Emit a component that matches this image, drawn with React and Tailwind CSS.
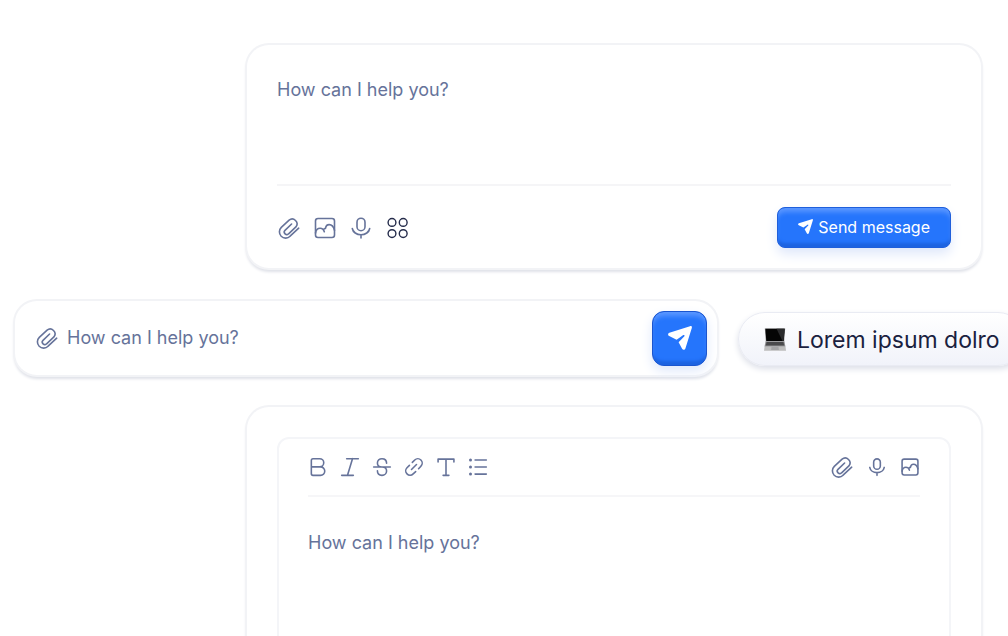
import React from 'react';

function Icon({ children, size = 24, weight = 1.6, className = '' }) {
    return (
        <svg
            width={size}
            height={size}
            viewBox="0 0 24 24"
            fill="none"
            stroke="currentColor"
            strokeWidth={weight}
            strokeLinecap="round"
            strokeLinejoin="round"
            className={`shrink-0 ${className}`}
            aria-hidden="true"
        >
            {children}
        </svg>
    );
}

const ClipIcon = (props) => (
    <Icon {...props}>
        <path d="M21.700 12.200l-8.600 8a6.300 6.300 0 0 1-8.900.1 6.300 6.300 0 0 1 .1-8.900l7.800-7.200a4.800 4.800 0 0 1 6.800 6.700l-7.300 6.900a2.500 2.500 0 0 1-3.600-3.500l6.600-6.300" />
    </Icon>
);

const ImageIcon = (props) => (
    <Icon {...props}>
        <rect x="2.500" y="2.500" width="19" height="19" rx="2.500" />
        <path d="M2.500 17c.5-2.900 2.300-4.700 4.600-4.700 2.200 0 3.600 1.300 4.200 3.500M10.500 13.600c.5-.8 1.200-1.200 2-1.200.3-2.200 1.700-3.800 3.700-3.800 2.700 0 4.500 2.500 5.300 5.600" />
    </Icon>
);

const MicIcon = (props) => (
    <Icon {...props}>
        <rect x="8" y="2.200" width="8" height="12.500" rx="4" />
        <path d="M3.300 12.500c.6 3.700 4.300 6.200 8.700 6.200s8.100-2.500 8.700-6.200M12 18.700v3.300" />
    </Icon>
);

const AppsIcon = (props) => (
    <Icon {...props}>
        <circle cx="7" cy="6.400" r="3.900" />
        <circle cx="18.200" cy="6.400" r="3.900" />
        <circle cx="7" cy="17.600" r="3.900" />
        <circle cx="18.200" cy="17.600" r="3.900" />
    </Icon>
);

const BoldIcon = (props) => (
    <Icon {...props}>
        <path d="M4 4.200C4 3 4.600 2 6 2h8a4.900 4.900 0 0 1 0 9.800H4zM4 11.800H15a5.100 5.100 0 0 1 0 10.200H6c-1.400 0-2-.8-2-2.200z" />
    </Icon>
);

const ItalicIcon = (props) => (
    <Icon {...props}>
        <path d="M8 2h14M2 22h14M15 2L9 22" />
    </Icon>
);

const StrikeIcon = (props) => (
    <Icon {...props}>
        <path d="M2 12h20M17.500 7.500C17.500 4.200 15.200 2 12 2S6.500 4.300 6.500 7.200C6.500 9.800 8.200 12 12 12M12 12c3.800 0 5.500 2 5.500 4.800S15.200 22 12 22s-5.500-2.200-5.500-5.500" />
    </Icon>
);

const LinkIcon = (props) => (
    <Icon {...props}>
        <path d="M9 15l6-6M10 6.500l2.900-2.900a5.100 5.100 0 0 1 7.400 7.400L17.500 14M6.500 10l-2.900 2.900a5.100 5.100 0 0 0 7.400 7.400L14 17.500" />
    </Icon>
);

const TextIcon = (props) => (
    <Icon {...props}>
        <path d="M2.500 6V2.500h19V6M12 2.500V22M8.500 22h7" />
    </Icon>
);

const ListIcon = (props) => (
    <Icon {...props}>
        <path d="M8.500 3.500H22M8.500 12H22M8.500 20.500H22" />
        <g fill="currentColor" stroke="none">
            <circle cx="3" cy="3.500" r="1.800" />
            <circle cx="3" cy="12" r="1.800" />
            <circle cx="3" cy="20.500" r="1.800" />
        </g>
    </Icon>
);

function PlaneIcon({ size }) {
    return (
        <svg width={size} height={size} viewBox="0 0 24 24" fill="currentColor" className="shrink-0" aria-hidden="true">
            <path d="M22 0.200c1.400-.4 2.200.5 1.800 1.800L17.400 22.400c-.5 1.700-2.500 1.900-3.300.4L10.600 16.300l5.800-6.100c.6-.8-.3-1.700-1.100-1.100L8.600 13.700 1.200 10.100C-.4 9.300-.2 7.200 1.400 6.700z" />
        </svg>
    );
}

function LaptopIcon() {
    return (
        <svg width="24" height="24" viewBox="0 0 24 24" className="shrink-0" aria-hidden="true">
            <path d="M1.800 .5h20.400l-1 13H2.800z" fill="#8b8b8d" />
            <path d="M2.400 .8h19.200l-.9 12.200H3.300z" fill="#050505" />
            <path d="M13.500 .8h8.100l-.9 12.200h-1.200z" fill="#2a2a2c" />
            <path d="M2.600 13.200h18.800l1.100 5.600H1.500z" fill="#8e8e90" />
            <path d="M3.500 14h17l.7 3.500H2.800z" fill="#4a4a4c" />
            <path d="M1.500 18.700h21l.5 4H1z" fill="#bdbdbd" />
            <path d="M8.500 18.700h7l.4 3.300H8.100z" fill="#a4a4a6" />
        </svg>
    );
}

function ToolButton({ label, className = '', children }) {
    return (
        <button type="button" aria-label={label} className={`flex ${className}`}>
            {children}
        </button>
    );
}

const formatTools = [
    { label: 'Bold', Glyph: BoldIcon },
    { label: 'Italic', Glyph: ItalicIcon },
    { label: 'Strikethrough', Glyph: StrikeIcon },
    { label: 'Link', Glyph: LinkIcon },
    { label: 'Text', Glyph: TextIcon },
    { label: 'List', Glyph: ListIcon },
];

export default function App() {
    return (
        <div className="h-screen overflow-hidden bg-white pt-[45px] font-['Inter',sans-serif] text-[#66739a]">
            {/* Message box */}
            <form className="mr-[27px] ml-[247px] rounded-[22px] bg-white px-[30px] pt-[31px] pb-5 shadow-[0_0_0_2px_#f2f3f6,0_3px_3px_1px_#dfe1e8]">
                <textarea
                    aria-label="Message"
                    placeholder="How can I help you?"
                    className="block h-[108px] w-full resize-none text-lg outline-none placeholder:text-[#66739a] placeholder:opacity-100"
                />
                <div className="flex items-center justify-between border-t-2 border-[#f5f5f7] pt-[21px]">
                    <div className="flex items-center gap-3">
                        <ToolButton label="Attach file"><ClipIcon /></ToolButton>
                        <ToolButton label="Add image"><ImageIcon /></ToolButton>
                        <ToolButton label="Record voice"><MicIcon /></ToolButton>
                        <ToolButton label="Apps" className="text-[#252c4b]"><AppsIcon weight={1.4} /></ToolButton>
                    </div>
                    <button
                        type="button"
                        className="flex h-[41px] items-center gap-[5px] rounded-lg border border-[#1f5fdb] bg-[#2575fc] px-5 pb-0.5 text-base text-white shadow-[inset_0_6px_5px_-2px_#5b97ff,inset_0_-5px_3px_-1px_#1d63e0,0_6px_12px_#dfe8fb]"
                    >
                        <PlaneIcon size={15} />
                        Send message
                    </button>
                </div>
            </form>

            {/* Inline input with suggestion */}
            <div className="mt-[33px] flex items-center gap-[21px] pl-[15px]">
                <form className="flex h-[74px] w-[702px] shrink-0 items-center gap-2 rounded-[22px] bg-white pr-2.5 pl-5 shadow-[0_0_0_2px_#f2f3f6,0_3px_3px_1px_#dfe1e8]">
                    <ToolButton label="Attach file"><ClipIcon /></ToolButton>
                    <input
                        type="text"
                        aria-label="Message"
                        placeholder="How can I help you?"
                        className="min-w-0 flex-1 text-lg outline-none placeholder:text-[#66739a] placeholder:opacity-100"
                    />
                    <button
                        type="button"
                        aria-label="Send"
                        className="flex size-[55px] items-center justify-center rounded-xl border border-[#1a55cf] bg-[#2575fc] text-white shadow-[inset_0_6px_5px_-2px_#5b97ff,inset_0_-6px_3px_-2px_#1d63e0,0_5px_12px_#dfe8fb]"
                    >
                        <PlaneIcon size={24} />
                    </button>
                </form>
                <button
                    type="button"
                    className="mt-0.5 flex h-[54px] shrink-0 items-center gap-2.5 rounded-full border border-[#e9ebf3] bg-linear-to-b from-white to-[#f1f3fa] px-6 pt-0.5 text-[23px] whitespace-nowrap text-[#1a2140] shadow-[0_3px_6px_#dcdfe8]"
                >
                    <LaptopIcon />
                    Lorem ipsum dolro
                </button>
            </div>

            {/* Rich text editor */}
            <form className="mt-8 mr-[27px] ml-[247px] rounded-[22px] bg-white p-[30px] shadow-[0_0_0_2px_#f2f3f6,0_3px_3px_1px_#dfe1e8]">
                <div className="rounded-xl border-2 border-[#f4f5f8] px-[29px]">
                    <div className="flex items-center justify-between border-b-2 border-[#f6f6f8] py-4">
                        <div className="flex items-center gap-3">
                            {formatTools.map(({ label, Glyph }) => (
                                <ToolButton key={label} label={label}><Glyph size={20} weight={1.9} /></ToolButton>
                            ))}
                        </div>
                        <div className="flex items-center gap-[13px]">
                            <ToolButton label="Attach file"><ClipIcon /></ToolButton>
                            <ToolButton label="Record voice"><MicIcon size={20} weight={1.9} /></ToolButton>
                            <ToolButton label="Add image"><ImageIcon size={20} weight={1.9} /></ToolButton>
                        </div>
                    </div>
                    <textarea
                        aria-label="Formatted message"
                        placeholder="How can I help you?"
                        className="mt-8 block h-40 w-full resize-none text-lg outline-none placeholder:text-[#66739a] placeholder:opacity-100"
                    />
                </div>
            </form>
        </div>
    );
}
